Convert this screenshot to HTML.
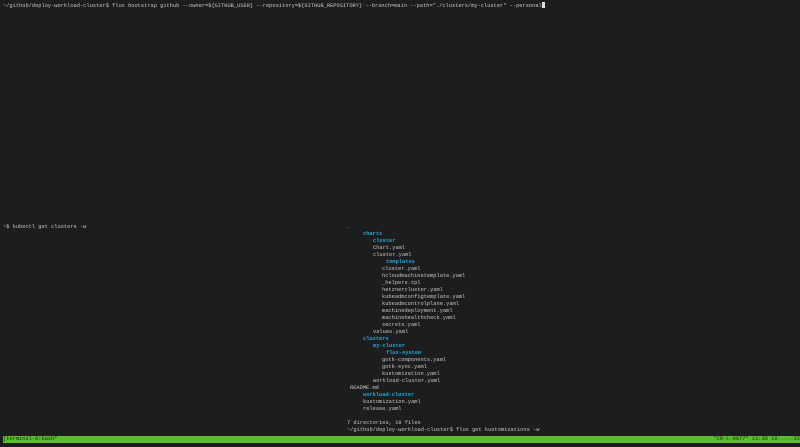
<!DOCTYPE html>
<html><head><meta charset="utf-8"><style>
html,body{margin:0;padding:0;width:800px;height:447px;background:#1c1d1f;overflow:hidden}
.l{position:absolute;font-family:"Liberation Mono",monospace;font-size:5.35px;line-height:7px;color:#c4c4c4;white-space:pre}
.b{color:#27a7d6;font-weight:bold}
#bar{position:absolute;left:3px;top:436px;width:797px;height:7px;background:#5cbf2a}
#bar span{position:absolute;top:0;font-family:"Liberation Mono",monospace;font-size:5.35px;line-height:7px;color:#1a2a10;white-space:pre}
.cur{display:inline-block;width:3px;height:6px;background:#ddd;vertical-align:-1px}
</style></head><body>
<div class="l" style="left:3px;top:2px">~/github/deploy-workload-cluster$ flux bootstrap github --owner=${GITHUB_USER} --repository=${GITHUB_REPOSITORY} --branch=main --path="./clusters/my-cluster" --personal<span class="cur"></span></div>
<div class="l" style="left:3px;top:224px">~$ kubectl get clusters -w</div>
<div class="l" style="left:347px;top:224px">.</div>
<div class="l b" style="left:363px;top:231px">charts</div>
<div class="l b" style="left:373px;top:238px">cluster</div>
<div class="l" style="left:373px;top:245px">Chart.yaml</div>
<div class="l" style="left:373px;top:252px">cluster.yaml</div>
<div class="l b" style="left:386px;top:259px">templates</div>
<div class="l" style="left:382px;top:266px">cluster.yaml</div>
<div class="l" style="left:382px;top:273px">hcloudmachinetemplate.yaml</div>
<div class="l" style="left:382px;top:280px">_helpers.tpl</div>
<div class="l" style="left:382px;top:287px">hetznercluster.yaml</div>
<div class="l" style="left:382px;top:294px">kubeadmconfigtemplate.yaml</div>
<div class="l" style="left:382px;top:301px">kubeadmcontrolplane.yaml</div>
<div class="l" style="left:382px;top:308px">machinedeployment.yaml</div>
<div class="l" style="left:382px;top:315px">machinehealthcheck.yaml</div>
<div class="l" style="left:382px;top:322px">secrets.yaml</div>
<div class="l" style="left:373px;top:329px">values.yaml</div>
<div class="l b" style="left:363px;top:336px">clusters</div>
<div class="l b" style="left:373px;top:343px">my-cluster</div>
<div class="l b" style="left:386px;top:350px">flux-system</div>
<div class="l" style="left:382px;top:357px">gotk-components.yaml</div>
<div class="l" style="left:382px;top:364px">gotk-sync.yaml</div>
<div class="l" style="left:382px;top:371px">kustomization.yaml</div>
<div class="l" style="left:373px;top:378px">workload-cluster.yaml</div>
<div class="l" style="left:350px;top:385px">README.md</div>
<div class="l b" style="left:363px;top:392px">workload-cluster</div>
<div class="l" style="left:363px;top:399px">kustomization.yaml</div>
<div class="l" style="left:363px;top:406px">release.yaml</div>
<div class="l" style="left:347px;top:420px">7 directories, 19 files</div>
<div class="l" style="left:347px;top:427px">~/github/deploy-workload-cluster$ flux get kustomizations -w</div>
<div id="bar"><span style="left:0">[terminal-0:bash*</span><span style="right:0">"CR-L-0077" 11:36 16-...-22</span></div>
</body></html>
